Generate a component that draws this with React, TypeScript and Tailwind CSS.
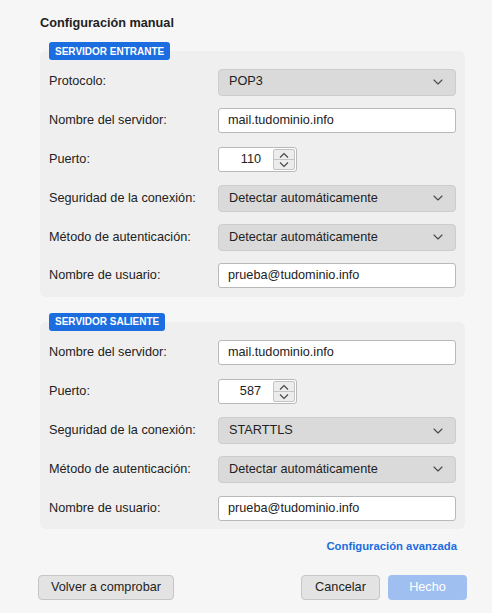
const FONT = "font-['Liberation_Sans','Helvetica',sans-serif]";

function Chevron() {
  return (
    <svg width="10" height="6" viewBox="0 0 10 6" fill="none" stroke="#4a4a4a" strokeWidth="1.1" strokeLinecap="round" strokeLinejoin="round">
      <path d="M1 1 L5 5 L9 1" />
    </svg>
  );
}

function Select({ value }: { value: string }) {
  return (
    <div className="flex h-[27px] w-[238px] items-center justify-between rounded-[4px] border border-[#cdcdcd] bg-[#dadada] pl-[10px] pr-[12px] text-[12.7px] text-[#222]">
      <span>{value}</span>
      <Chevron />
    </div>
  );
}

function TextBox({ value }: { value: string }) {
  return (
    <div className="flex h-[25px] w-[238px] items-center rounded-[3px] border border-[#b9b9b9] bg-white px-[9px] text-[12.7px] text-[#222]">
      {value}
    </div>
  );
}

function Stepper({ value }: { value: string }) {
  return (
    <div className="flex h-[25px] w-[79px] rounded-[3px] border border-[#b9b9b9] bg-white">
      <div className="flex flex-1 items-center justify-end pr-[12px] text-[12.7px] text-[#222]">{value}</div>
      <div className="my-[1px] mr-[1px] flex w-[22px] flex-col rounded-[2px] border border-[#c4c4c4] bg-[#ececec]">
        <div className="flex flex-1 items-center justify-center border-b border-[#c4c4c4]">
          <svg width="10" height="6" viewBox="0 0 10 6" fill="none" stroke="#444" strokeWidth="1.1">
            <path d="M1 5.5 L5 1.5 L9 5.5" />
          </svg>
        </div>
        <div className="flex flex-1 items-center justify-center">
          <svg width="10" height="6" viewBox="0 0 10 6" fill="none" stroke="#444" strokeWidth="1.1">
            <path d="M1 0.5 L5 4.5 L9 0.5" />
          </svg>
        </div>
      </div>
    </div>
  );
}

function Row({ label, children }: { label: string; children: React.ReactNode }) {
  return (
    <div className="flex h-[26px] items-center">
      <div className="w-[169px] text-[12.7px] text-[#222]">{label}</div>
      {children}
    </div>
  );
}

function Section({ title, children, top }: { title: string; children: React.ReactNode; top: string }) {
  return (
    <div className={top}>
      <div className="relative z-10 ml-[11px] flex h-[18px] w-fit items-center rounded-[3px] bg-[#1b6de0] px-[6px] text-[10px] font-bold text-white">
        {title}
      </div>
      <div className="mx-[2px] -mt-[9px] flex flex-col gap-[12.8px] rounded-[6px] bg-[#efefef] pb-[8px] pl-[9px] pr-[9px] pt-[18px]">
        {children}
      </div>
    </div>
  );
}

export default function App() {
  return (
    <div className={`h-[613px] w-[492px] bg-[#f6f6f6] pl-[38px] pr-[25px] pt-[15px] ${FONT}`}>
      <div className="h-[17px] pl-[2px] text-[12.7px] font-bold leading-[17px] text-[#222]">Configuración manual</div>

      <Section title="SERVIDOR ENTRANTE" top="mt-[10px]">
        <Row label="Protocolo:"><Select value="POP3" /></Row>
        <Row label="Nombre del servidor:"><TextBox value="mail.tudominio.info" /></Row>
        <Row label="Puerto:"><Stepper value="110" /></Row>
        <Row label="Seguridad de la conexión:"><Select value="Detectar automáticamente" /></Row>
        <Row label="Método de autenticación:"><Select value="Detectar automáticamente" /></Row>
        <Row label="Nombre de usuario:"><TextBox value="prueba@tudominio.info" /></Row>
      </Section>

      <Section title="SERVIDOR SALIENTE" top="mt-[16px]">
        <Row label="Nombre del servidor:"><TextBox value="mail.tudominio.info" /></Row>
        <Row label="Puerto:"><Stepper value="587" /></Row>
        <Row label="Seguridad de la conexión:"><Select value="STARTTLS" /></Row>
        <Row label="Método de autenticación:"><Select value="Detectar automáticamente" /></Row>
        <Row label="Nombre de usuario:"><TextBox value="prueba@tudominio.info" /></Row>
      </Section>

      <div className="mt-[9px] flex justify-end pr-[10px]">
        <span className="text-[11.3px] font-bold text-[#1b6de0]">Configuración avanzada</span>
      </div>

      <div className="mt-[20px] flex items-center">
        <button className="h-[25px] w-[136px] rounded-[4px] border border-[#c6c6c6] bg-[#e3e3e3] text-[12.7px] text-[#222]">
          Volver a comprobar
        </button>
        <div className="flex-1" />
        <button className="h-[25px] w-[79px] rounded-[4px] border border-[#c6c6c6] bg-[#e3e3e3] text-[12.7px] text-[#222]">
          Cancelar
        </button>
        <button className="ml-[8px] h-[25px] w-[79px] rounded-[4px] bg-[#9fbff0] text-[12.7px] text-white">
          Hecho
        </button>
      </div>
    </div>
  );
}
